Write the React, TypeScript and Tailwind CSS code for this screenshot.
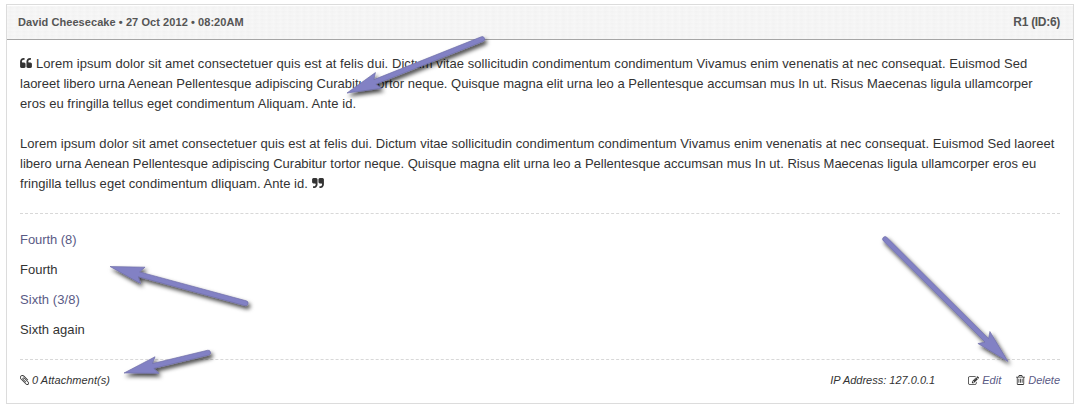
import React from 'react';

type ArrowProps = { tip: [number, number]; tail: [number, number] };

function Arrow({ tip, tail }: ArrowProps) {
  const dx = tail[0] - tip[0];
  const dy = tail[1] - tip[1];
  const length = Math.hypot(dx, dy);
  const angle = (Math.atan2(dy, dx) * 180) / Math.PI;
  return (
    <g filter="url(#arrow-shadow)">
      <path
        transform={`translate(${tip[0]} ${tip[1]}) rotate(${angle})`}
        d={`M0 0 L34 -8.5 L30 -2.5 H${length - 3} A2.5 2.5 0 0 1 ${length - 3} 2.5 H30 L34 8.5 Z`}
        fill="#8281c4"
        stroke="#6e6da6"
        strokeWidth="0.6"
      />
    </g>
  );
}

const icons = {
  quoteLeft:
    'M832 960v384q0 80-56 136t-136 56h-384q-80 0-136-56t-56-136v-704q0-104 40.5-198.5t109.5-163.5 163.5-109.5 198.5-40.5h64q26 0 45 19t19 45v128q0 26-19 45t-45 19h-64q-106 0-181 75t-75 181v32q0 40 28 68t68 28h224q80 0 136 56t56 136zm896 0v384q0 80-56 136t-136 56h-384q-80 0-136-56t-56-136v-704q0-104 40.5-198.5t109.5-163.5 163.5-109.5 198.5-40.5h64q26 0 45 19t19 45v128q0 26-19 45t-45 19h-64q-106 0-181 75t-75 181v32q0 40 28 68t68 28h224q80 0 136 56t56 136z',
  quoteRight:
    'M832 448v704q0 104-40.5 198.5t-109.5 163.5-163.5 109.5-198.5 40.5h-64q-26 0-45-19t-19-45v-128q0-26 19-45t45-19h64q106 0 181-75t75-181v-32q0-40-28-68t-68-28h-224q-80 0-136-56t-56-136v-384q0-80 56-136t136-56h384q80 0 136 56t56 136zm896 0v704q0 104-40.5 198.5t-109.5 163.5-163.5 109.5-198.5 40.5h-64q-26 0-45-19t-19-45v-128q0-26 19-45t45-19h64q106 0 181-75t75-181v-32q0-40-28-68t-68-28h-224q-80 0-136-56t-56-136v-384q0-80 56-136t136-56h384q80 0 136 56t56 136z',
  paperclip:
    'M1596 1385q0 117-79 196t-196 79q-135 0-235-100l-777-776q-113-115-113-271 0-159 110-270t269-111q158 0 273 113l605 606q10 10 10 22 0 16-30.5 46.5t-46.5 30.5q-13 0-23-10l-606-607q-79-77-181-77-106 0-179 75t-73 181q0 105 76 181l776 777q63 63 145 63 64 0 106-42t42-106q0-82-63-145l-581-581q-26-24-60-24-29 0-48 19t-19 48q0 32 25 59l410 410q10 10 10 22 0 16-31 47t-47 31q-12 0-22-10l-410-410q-63-61-63-149 0-82 57-139t139-57q88 0 149 63l581 581q100 98 100 235z',
  edit:
    'M888 1184l116-116-152-152-116 116v56h96v96h56zm440-720q-16-16-33 1l-350 350q-17 17-1 33t33-1l350-350q17-17 1-33zm80 594v190q0 119-84.5 203.5t-203.5 84.5h-832q-119 0-203.5-84.5t-84.5-203.5v-832q0-119 84.5-203.5t203.5-84.5h832q63 0 117 25 15 7 18 23 3 17-9 29l-49 49q-14 14-32 8-23-6-45-6h-832q-66 0-113 47t-47 113v832q0 66 47 113t113 47h832q66 0 113-47t47-113v-126q0-13 9-22l64-64q15-15 35-7t20 29zm-96-738l288 288-672 672h-288v-288zm444 132l-92 92-288-288 92-92q28-28 68-28t68 28l152 152q28 28 28 68t-28 68z',
  trash:
    'M704 736v576q0 14-9 23t-23 9h-64q-14 0-23-9t-9-23v-576q0-14 9-23t23-9h64q14 0 23 9t9 23zm256 0v576q0 14-9 23t-23 9h-64q-14 0-23-9t-9-23v-576q0-14 9-23t23-9h64q14 0 23 9t9 23zm256 0v576q0 14-9 23t-23 9h-64q-14 0-23-9t-9-23v-576q0-14 9-23t23-9h64q14 0 23 9t9 23zm128 724v-948h-896v948q0 22 7 40.5t14.5 27 10.5 8.5h832q3 0 10.5-8.5t14.5-27 7-40.5zm-672-1076h448l-48-117q-7-9-17-11h-317q-10 2-17 11zm928 32v64q0 14-9 23t-23 9h-96v948q0 83-47 143.5t-113 60.5h-832q-66 0-113-58.5t-47-141.5v-952h-96q-14 0-23-9t-9-23v-64q0-14 9-23t23-9h309l70-167q15-37 54-63t79-26h320q40 0 79 26t54 63l70 167h309q14 0 23 9t9 23z',
};

function Icon({ name, viewBox, className }: { name: keyof typeof icons; viewBox: string; className: string }) {
  return (
    <svg viewBox={viewBox} className={className} fill="currentColor" aria-hidden="true">
      <path d={icons[name]} />
    </svg>
  );
}

const paragraphs = [
  [
    {
      text: 'Lorem ipsum dolor sit amet consectetuer quis est at felis dui. Dictum vitae sollicitudin condimentum condimentum Vivamus enim venenatis at nec consequat. Euismod Sed',
      spacing: 'tracking-[0.053px]',
    },
    {
      text: 'laoreet libero urna Aenean Pellentesque adipiscing Curabitur tortor neque. Quisque magna elit urna leo a Pellentesque accumsan mus In ut. Risus Maecenas ligula ullamcorper',
      spacing: 'tracking-[0.005px]',
    },
    { text: 'eros eu fringilla tellus eget condimentum Aliquam. Ante id.', spacing: 'tracking-[0.05px]' },
  ],
  [
    {
      text: 'Lorem ipsum dolor sit amet consectetuer quis est at felis dui. Dictum vitae sollicitudin condimentum condimentum Vivamus enim venenatis at nec consequat. Euismod Sed laoreet',
      spacing: 'tracking-[0.05px]',
    },
    {
      text: 'libero urna Aenean Pellentesque adipiscing Curabitur tortor neque. Quisque magna elit urna leo a Pellentesque accumsan mus In ut. Risus Maecenas ligula ullamcorper eros eu',
      spacing: 'tracking-[0.005px]',
    },
    { text: 'fringilla tellus eget condimentum dliquam. Ante id.', spacing: 'tracking-[0.05px]' },
  ],
];

export default function App() {
  return (
    <div className="relative h-[410px] w-[1081px] overflow-hidden bg-white pl-1.5 pt-1 font-['Liberation_Sans',Arial,sans-serif] text-[13px] leading-5 text-[#333]">
      <article className="h-[400px] w-[1068px] border border-[#dcdcdc] bg-white">
        <header className="flex h-[35px] items-center justify-between border-b border-[#a5a5a5] bg-[#f2f2f2] bg-[repeating-linear-gradient(90deg,rgba(255,255,255,0.28)_0px,rgba(255,255,255,0)_3px,rgba(255,255,255,0.2)_7px),repeating-linear-gradient(0deg,rgba(255,255,255,0.25)_0px,rgba(255,255,255,0)_4px)] pl-[11px] pr-[13px] font-bold text-[#555] shadow-[inset_0_1px_0_#fff]">
          <span className="text-[11px] tracking-[0.07px]">David Cheesecake • 27 Oct 2012 • 08:20AM</span>
          <span className="text-xs tracking-[-0.3px]">R1 (ID:6)</span>
        </header>
        <div className="mx-[13px] pt-3.5">
          <div className="flex h-40 flex-col gap-5 border-b border-dashed border-[#d8d8d8]">
            {paragraphs.map((lines, p) => (
              <p key={p}>
                {lines.map(({ text, spacing }, i) => (
                  <span key={i} className={`block h-5 whitespace-nowrap ${spacing}`}>
                    {p === 0 && i === 0 && (
                      <Icon name="quoteLeft" viewBox="64 128 1664 1408" className="mr-1 inline-block h-2.5 w-3 align-[0px]" />
                    )}
                    {text}
                    {p === 1 && i === 2 && (
                      <Icon name="quoteRight" viewBox="64 256 1664 1408" className="ml-1 inline-block h-2.5 w-3 align-[0px]" />
                    )}
                  </span>
                ))}
              </p>
            ))}
          </div>
          <dl className="flex h-[146px] flex-col gap-2.5 border-b border-dashed border-[#d8d8d8] pt-4">
            <dt className="tracking-[-0.05px] text-[#5a5a85]">Fourth (8)</dt>
            <dd>Fourth</dd>
            <dt className="tracking-[0.05px] text-[#5a5a85]">Sixth (3/8)</dt>
            <dd className="tracking-[0.05px]">Sixth again</dd>
          </dl>
          <footer className="flex items-center justify-between pt-2.5 text-[11px] italic">
            <span className="flex items-center gap-[3px]">
              <Icon name="paperclip" viewBox="196 132 1400 1528" className="h-2.5 w-[9px]" />
              <span className="tracking-[0.05px]">0 Attachment(s)</span>
            </span>
            <div className="flex">
              <span className="mr-[33px]">IP Address: 127.0.0.1</span>
              <a className="mr-[15px] flex items-center gap-[3px] text-[#5a5a85]">
                <Icon name="edit" viewBox="0 128 1792 1408" className="h-[9px] w-[11px] text-[#333]" />
                Edit
              </a>
              <a className="flex items-center gap-[3px] text-[#5a5a85]">
                <Icon name="trash" viewBox="192 128 1408 1536" className="h-[10px] w-[9px] text-[#333]" />
                Delete
              </a>
            </div>
          </footer>
        </div>
      </article>
      <svg className="pointer-events-none absolute left-0 top-0" width="1081" height="410" viewBox="0 0 1081 410">
        <defs>
          <filter id="arrow-shadow" x="-20%" y="-30%" width="150%" height="180%">
            <feDropShadow dx="2" dy="3" stdDeviation="2.2" floodColor="#000" floodOpacity="0.75" />
          </filter>
        </defs>
        <Arrow tip={[347, 93]} tail={[485, 38]} />
        <Arrow tip={[110, 266.5]} tail={[248.5, 304]} />
        <Arrow tip={[124, 373]} tail={[211, 352]} />
        <Arrow tip={[1008, 361.5]} tail={[883, 237]} />
      </svg>
    </div>
  );
}
